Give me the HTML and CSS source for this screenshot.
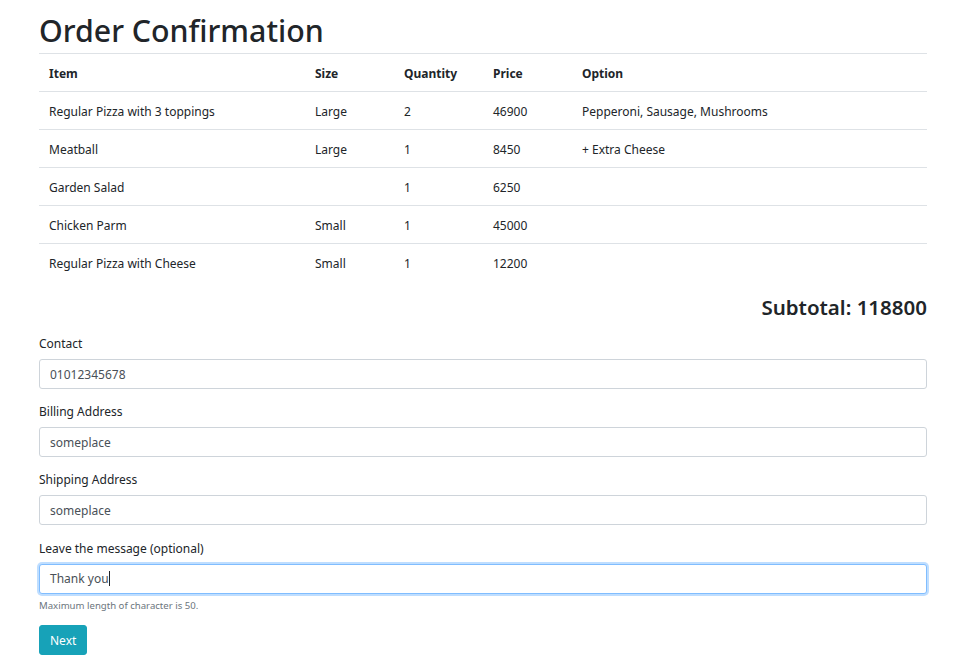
FILE: index.html
```html
<!DOCTYPE html>
<html>
<head>
<meta charset="utf-8">
<link rel="stylesheet" href="styles.css">
</head>
<body>
<div class="container">
  <h1 class="title">Order Confirmation</h1>
  <table class="table">
    <thead>
      <tr><th class="c-item">Item</th><th class="c-size">Size</th><th class="c-qty">Quantity</th><th class="c-price">Price</th><th>Option</th></tr>
    </thead>
    <tbody>
      <tr><td>Regular Pizza with 3 toppings</td><td>Large</td><td>2</td><td>46900</td><td>Pepperoni, Sausage, Mushrooms</td></tr>
      <tr><td>Meatball</td><td>Large</td><td>1</td><td>8450</td><td>+ Extra Cheese</td></tr>
      <tr><td>Garden Salad</td><td></td><td>1</td><td>6250</td><td></td></tr>
      <tr><td>Chicken Parm</td><td>Small</td><td>1</td><td>45000</td><td></td></tr>
      <tr><td>Regular Pizza with Cheese</td><td>Small</td><td>1</td><td>12200</td><td></td></tr>
    </tbody>
  </table>
  <h3 class="subtotal">Subtotal: 118800</h3>
  <form class="form">
    <div class="group">
      <label class="label">Contact</label>
      <input class="input" type="text" value="01012345678">
    </div>
    <div class="group">
      <label class="label">Billing Address</label>
      <input class="input" type="text" value="someplace">
    </div>
    <div class="group">
      <label class="label">Shipping Address</label>
      <input class="input" type="text" value="someplace">
    </div>
    <div class="group last">
      <label class="label">Leave the message (optional)</label>
      <div class="input focus">Thank you<span class="caret"></span></div>
      <small class="help">Maximum length of character is 50.</small>
    </div>
    <button type="button" class="btn">Next</button>
  </form>
</div>
</body>
</html>
```
FILE: styles.css
```css
* { box-sizing: border-box; }
html, body { margin: 0; padding: 0; background: #fff; }
body {
  font-family: "Noto Sans", "Open Sans", sans-serif;
  color: #212529;
  font-size: 12px;
}
.container {
  width: 888px;
  margin: 0 0 0 39px;
  padding-top: 8px;
}
.title {
  margin: 0;
  font-size: 30.3px;
  font-weight: 500;
  line-height: 45px;
  border-bottom: 1px solid #dee2e6;
}
.table {
  width: 100%;
  border-collapse: collapse;
  table-layout: fixed;
}
.table th, .table td {
  text-align: left;
  padding: 3px 10px 0;
  height: 38px;
  border-bottom: 1px solid #dee2e6;
  vertical-align: middle;
  line-height: 20px;
}
.table th { font-weight: 700; height: 37px; }
.table tbody tr:last-child td { border-bottom: none; }
.c-item { width: 266px; }
.c-size { width: 89px; }
.c-qty { width: 89px; }
.c-price { width: 89px; }
.subtotal {
  margin: 12px 0 14px;
  text-align: right;
  font-size: 20.5px;
  font-weight: 600;
  line-height: 28px;
}
.form { display: flex; flex-direction: column; gap: 14px; align-items: flex-start; }
.group { display: flex; flex-direction: column; gap: 6px; width: 100%; }
.group.last { margin-top: 1px; }
.label { line-height: 18px; }
.input {
  width: 100%;
  height: 30px;
  border: 1px solid #ced4da;
  border-radius: 3px;
  padding: 0 10px;
  font: inherit;
  color: #495057;
  line-height: 28px;
  background: #fff;
}
.input.focus {
  border-color: #80bdff;
  box-shadow: 0 0 0 2px rgba(0,123,255,.25);
}
.caret {
  display: inline-block;
  width: 1px;
  height: 15px;
  background: #212529;
  vertical-align: -3px;
}
.help {
  font-size: 9.6px;
  color: #6c757d;
  line-height: 12px;
  margin-top: 0;
}
.btn {
  font: inherit;
  color: #fff;
  background: #17a2b8;
  border: 1px solid #17a2b8;
  border-radius: 3px;
  height: 30px;
  padding: 0 10px;
  margin-top: -1px;
}
```
